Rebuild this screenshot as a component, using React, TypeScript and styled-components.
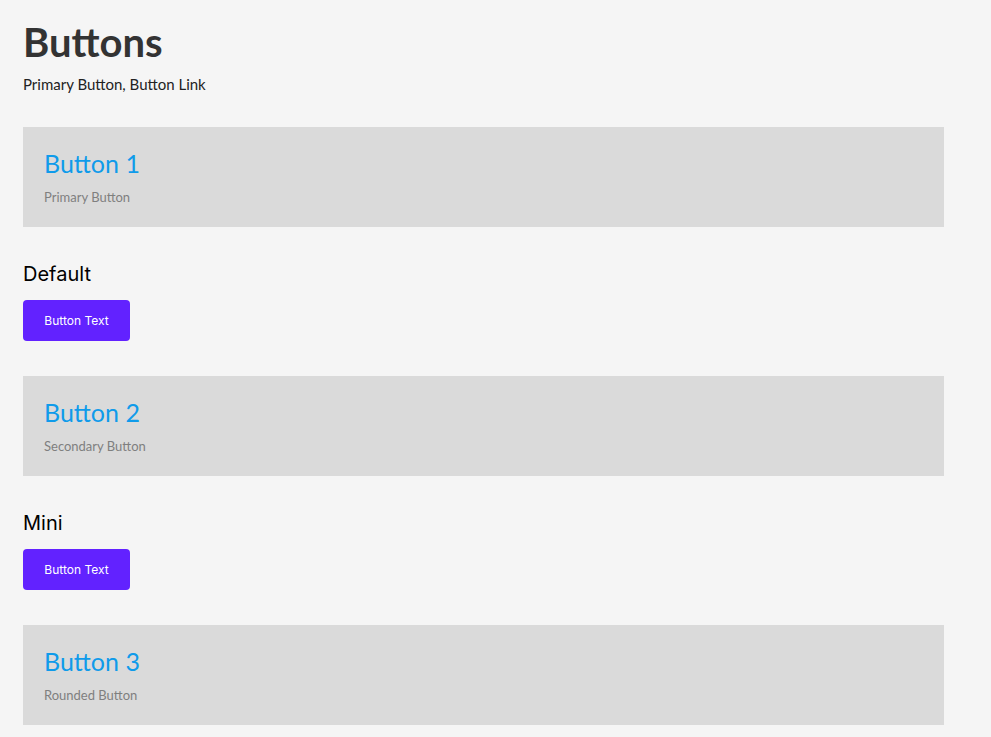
import React from 'react';
import styled, { createGlobalStyle } from 'styled-components';

const GlobalStyle = createGlobalStyle`
  body {
    margin: 0;
    background: #f5f5f5;
    font-family: 'Lato', 'Inter', sans-serif;
  }
`;

interface TSection {
  title: string;
  subtitle: string;
  variant: string;
}

const sections: TSection[] = [
  { title: 'Button 1', subtitle: 'Primary Button', variant: 'Default' },
  { title: 'Button 2', subtitle: 'Secondary Button', variant: 'Mini' },
  { title: 'Button 3', subtitle: 'Rounded Button', variant: '' }
];

const App = () => {
  return (
    <>
      <GlobalStyle />
      <SPage>
        <STitle>Buttons</STitle>
        <SSubtitle>Primary Button, Button Link</SSubtitle>
        {sections.map((section) => (
          <SSection key={section.title}>
            <SBanner>
              <SBannerTitle>{section.title}</SBannerTitle>
              <SBannerText>{section.subtitle}</SBannerText>
            </SBanner>
            {section.variant && (
              <SVariant>
                <SVariantTitle>{section.variant}</SVariantTitle>
                <SButton>Button Text</SButton>
              </SVariant>
            )}
          </SSection>
        ))}
      </SPage>
    </>
  );
};

export default App;

const SPage = styled.div`
  padding: 16px 47px 0 23px;
  display: flex;
  flex-direction: column;
`;

const STitle = styled.h1`
  margin: 0;
  font-size: 40px;
  font-weight: 700;
  color: #333333;
  line-height: 52px;
`;

const SSubtitle = styled.div`
  margin-top: 6px;
  font-size: 15px;
  color: #222222;
  line-height: 20px;
`;

const SSection = styled.div`
  margin-top: 33px;
  display: flex;
  flex-direction: column;
`;

const SBanner = styled.div`
  background: #dadada;
  height: 100px;
  box-sizing: border-box;
  padding: 21px 21px 0;
  display: flex;
  flex-direction: column;
`;

const SBannerTitle = styled.div`
  font-size: 25px;
  color: #0f9bea;
  line-height: 31px;
`;

const SBannerText = styled.div`
  margin-top: 9px;
  font-size: 13px;
  color: #7f7f7f;
  line-height: 18px;
`;

const SVariant = styled.div`
  margin-top: 34px;
  margin-bottom: 2px;
  display: flex;
  flex-direction: column;
  align-items: flex-start;
`;

const SVariantTitle = styled.div`
  font-family: 'Inter', sans-serif;
  font-size: 20px;
  color: #000000;
  line-height: 26px;
`;

const SButton = styled.button`
  margin-top: 13px;
  width: 107px;
  height: 41px;
  border: none;
  border-radius: 4px;
  background: #6222ff;
  color: #ffffff;
  font-family: 'Inter', sans-serif;
  font-size: 12px;
  cursor: pointer;
`;
